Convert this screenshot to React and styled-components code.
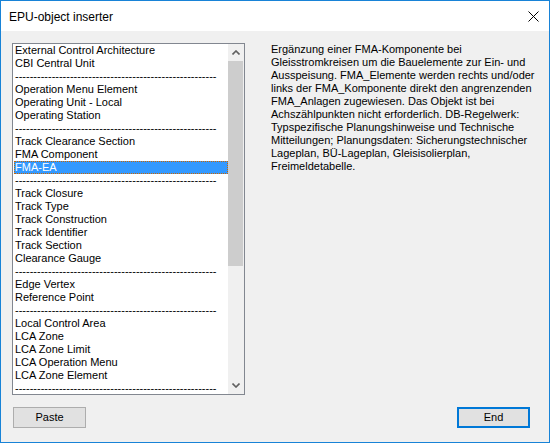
import React from "react";
import styled, { createGlobalStyle } from "styled-components";

const Global = createGlobalStyle`
  html, body { margin: 0; padding: 0; background: #ffffff; }
  * { box-sizing: border-box; }
`;

const Window = styled.div`
  width: 550px;
  height: 443px;
  border: 1px solid #1883d7;
  background: #f0f0f0;
  display: flex;
  flex-direction: column;
  font-family: "Liberation Sans", Arial, sans-serif;
  color: #000;
`;

const TitleBar = styled.div`
  height: 30px;
  flex: none;
  background: #ffffff;
  display: flex;
  align-items: center;
  padding: 0 10px 0 8px;
`;

const Title = styled.div`
  font-size: 12px;
  line-height: 16px;
  flex: 1;
  margin-top: 1px;
`;

const CloseIcon = styled.svg`
  width: 11px;
  height: 11px;
  display: block;
  margin-top: 1px;
`;

const Body = styled.div`
  flex: 1;
  display: flex;
  flex-direction: column;
  padding: 12px 19px 0 11px;
`;

const Main = styled.div`
  display: flex;
  align-items: flex-start;
`;

const ListBox = styled.div`
  width: 233px;
  height: 352px;
  border: 1px solid #828790;
  background: #ffffff;
  display: flex;
  flex: none;
`;

const Rows = styled.div`
  flex: 1;
  overflow: hidden;
  padding-left: 1px;
`;

const Row = styled.div`
  height: 13px;
  font-size: 11px;
  line-height: 13px;
  white-space: nowrap;
  padding-left: 1px;
  background: ${(p) => (p.$selected ? "#3399ff" : "transparent")};
  color: ${(p) => (p.$selected ? "#ffffff" : "#000000")};
  outline: ${(p) => (p.$selected ? "1px dotted #cc6600" : "none")};
  outline-offset: -1px;
`;

const ScrollBar = styled.div`
  width: 16px;
  flex: none;
  background: #f0f0f0;
  display: flex;
  flex-direction: column;
`;

const ArrowButton = styled.div`
  height: 17px;
  flex: none;
  display: flex;
  align-items: center;
  justify-content: center;
`;

const Track = styled.div`
  flex: 1;
  display: flex;
  flex-direction: column;
`;

const Thumb = styled.div`
  height: 205px;
  width: 15px;
  background: #cdcdcd;
`;

const Description = styled.div`
  margin-left: 26px;
  font-size: 11px;
  line-height: 13px;
  white-space: nowrap;
`;

const Line = styled.div`
  height: 13px;
`;

const Footer = styled.div`
  display: flex;
  justify-content: space-between;
  margin-top: 12px;
  padding-left: 1px;
`;

const Button = styled.button`
  width: 73px;
  height: 21px;
  margin: 0;
  padding: 0;
  background: #e1e1e1;
  border: ${(p) => (p.$default ? "2px solid #0078d7" : "1px solid #adadad")};
  font-family: "Liberation Sans", Arial, sans-serif;
  font-size: 11px;
  color: #000;
  line-height: 13px;
`;

const DASH = "-".repeat(55);

const items = [
  "External Control Architecture",
  "CBI Central Unit",
  DASH,
  "Operation Menu Element",
  "Operating Unit - Local",
  "Operating Station",
  DASH,
  "Track Clearance Section",
  "FMA Component",
  "FMA-EA",
  DASH,
  "Track Closure",
  "Track Type",
  "Track Construction",
  "Track Identifier",
  "Track Section",
  "Clearance Gauge",
  DASH,
  "Edge Vertex",
  "Reference Point",
  DASH,
  "Local Control Area",
  "LCA Zone",
  "LCA Zone Limit",
  "LCA Operation Menu",
  "LCA Zone Element",
  DASH,
];

const lines = [
  "Ergänzung einer FMA-Komponente bei",
  "Gleisstromkreisen um die Bauelemente zur Ein- und",
  "Ausspeisung. FMA_Elemente werden rechts und/oder",
  "links der FMA_Komponente direkt den angrenzenden",
  "FMA_Anlagen zugewiesen. Das Objekt ist bei",
  "Achszählpunkten nicht erforderlich. DB-Regelwerk:",
  "Typspezifische Planungshinweise und Technische",
  "Mitteilungen; Planungsdaten: Sicherungstechnischer",
  "Lageplan, BÜ-Lageplan, Gleisisolierplan,",
  "Freimeldetabelle.",
];

const Chevron = ({ up }) => (
  <svg width="8" height="5" viewBox="0 0 8 5">
    <path
      d={up ? "M0.5 4.5 L4 1 L7.5 4.5" : "M0.5 0.5 L4 4 L7.5 0.5"}
      fill="none"
      stroke="#606060"
      strokeWidth="1.6"
    />
  </svg>
);

export default function App() {
  return (
    <>
      <Global />
      <Window>
        <TitleBar>
          <Title>EPU-object inserter</Title>
          <CloseIcon viewBox="0 0 11 11">
            <path d="M0.5 0.5 L10.5 10.5 M10.5 0.5 L0.5 10.5" stroke="#000" strokeWidth="1" />
          </CloseIcon>
        </TitleBar>
        <Body>
          <Main>
            <ListBox>
              <Rows>
                {items.map((t, i) => (
                  <Row key={i} $selected={t === "FMA-EA"}>
                    {t}
                  </Row>
                ))}
              </Rows>
              <ScrollBar>
                <ArrowButton>
                  <Chevron up />
                </ArrowButton>
                <Track>
                  <Thumb />
                </Track>
                <ArrowButton>
                  <Chevron />
                </ArrowButton>
              </ScrollBar>
            </ListBox>
            <Description>
              {lines.map((l, i) => (
                <Line key={i}>{l}</Line>
              ))}
            </Description>
          </Main>
          <Footer>
            <Button>Paste</Button>
            <Button $default>End</Button>
          </Footer>
        </Body>
      </Window>
    </>
  );
}
